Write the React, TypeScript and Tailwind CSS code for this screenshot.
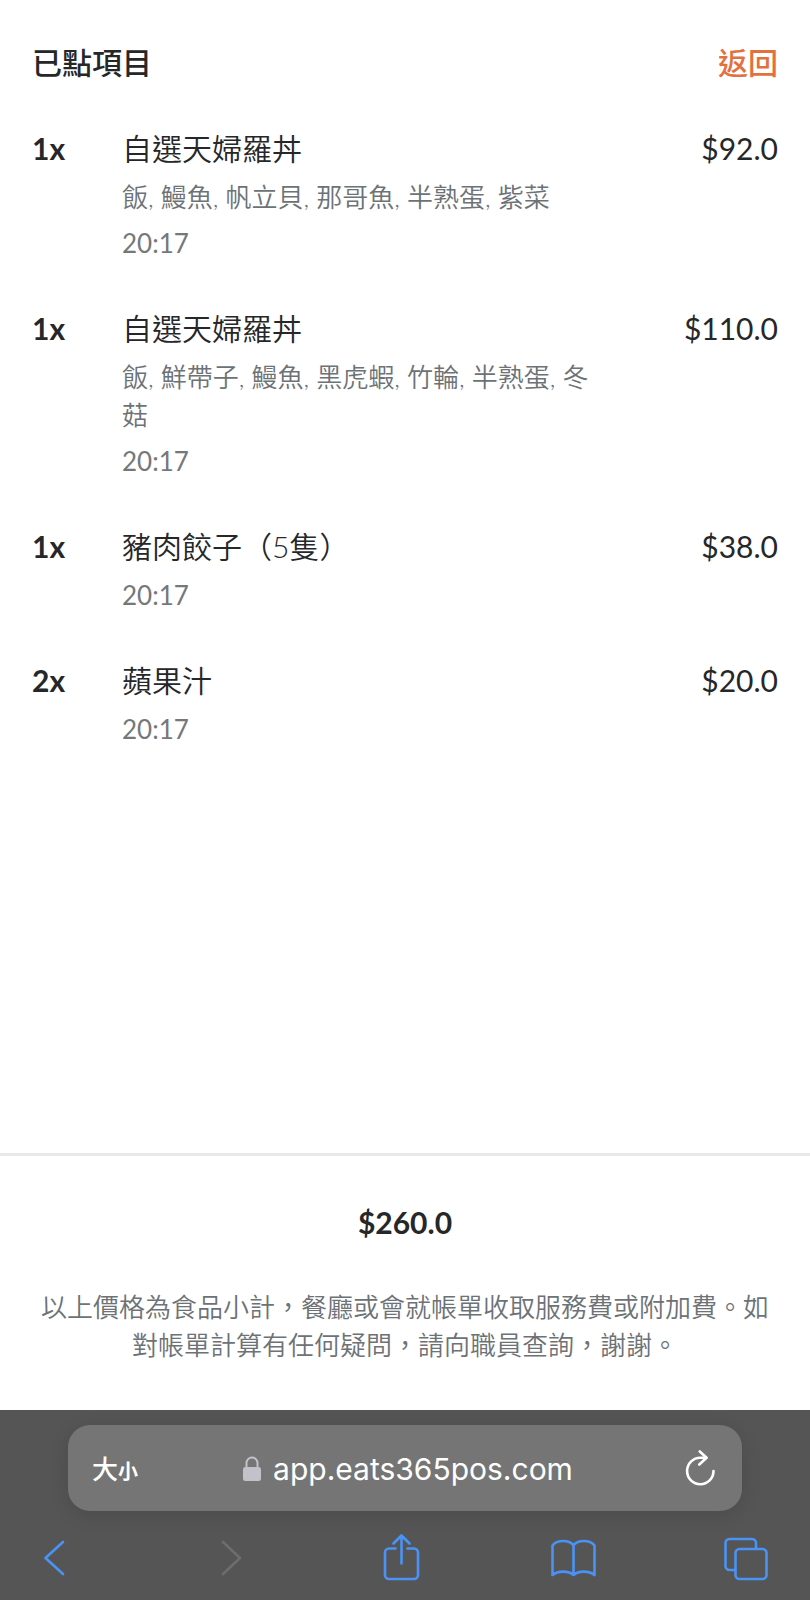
import React from 'react';

type OrderItem = {
  qty: number;
  name: string;
  options?: string;
  time: string;
  price: string;
};

const ITEMS: OrderItem[] = [
  { qty: 1, name: '自選天婦羅丼', options: '飯, 鰻魚, 帆立貝, 那哥魚, 半熟蛋, 紫菜', time: '20:17', price: '$92.0' },
  { qty: 1, name: '自選天婦羅丼', options: '飯, 鮮帶子, 鰻魚, 黑虎蝦, 竹輪, 半熟蛋, 冬菇', time: '20:17', price: '$110.0' },
  { qty: 1, name: '豬肉餃子（5隻）', time: '20:17', price: '$38.0' },
  { qty: 2, name: '蘋果汁', time: '20:17', price: '$20.0' },
];

const TOTAL = '$260.0';
const NOTE = '以上價格為食品小計，餐廳或會就帳單收取服務費或附加費。如對帳單計算有任何疑問，請向職員查詢，謝謝。';

function OrderRow({ item }: { item: OrderItem }) {
  return (
    <li className="flex items-start text-[30px] leading-[40px]">
      <span className="w-[90px] shrink-0 font-bold">{item.qty}x</span>
      <div className="flex flex-1 flex-col gap-2 min-w-0">
        <h2 className="mb-0.5 font-[350]">{item.name}</h2>
        {item.options && <p className="text-[26px] leading-[38px] font-[350] text-[#6c7276]">{item.options}</p>}
        <time className="text-[26px] leading-[38px] text-[#75787b]">{item.time}</time>
      </div>
      <span className="w-[176px] shrink-0 text-right">{item.price}</span>
    </li>
  );
}

function LockIcon() {
  return (
    <svg width="18" height="26" viewBox="0 0 18 26" fill="none" aria-hidden>
      <path d="M3.500 12V7a5.500 5.500 0 0 1 11 0v5" stroke="#c3c2ca" strokeWidth="2" />
      <rect x="0" y="11" width="18" height="14" rx="2.5" fill="#c3c2ca" />
    </svg>
  );
}

function AddressBar() {
  return (
    <div className="mx-[68px] flex h-[86px] items-center justify-between rounded-[22px] bg-[#757575] pl-6 pr-[26px] pt-0.5 text-white shadow-[0_4px_20px_rgba(0,0,0,0.12)]">
      <button type="button" aria-label="大小" className="flex w-12 items-baseline">
        <span className="text-[26px] font-medium">大</span>
        <span className="text-[20px] font-bold">小</span>
      </button>
      <button type="button" className="flex items-center gap-3 pr-2 font-[Inter] text-[30px]">
        <LockIcon />
        app.eats365pos.com
      </button>
      <button type="button" aria-label="重新載入" className="flex w-8 justify-center">
        <svg width="32" height="38" viewBox="0 0 32 38" fill="none" stroke="currentColor" strokeWidth="2.6" strokeLinecap="round" strokeLinejoin="round">
          <path d="M29.5 21A13.2 13.2 0 1 1 16.300 7.800h5.700" />
          <path d="M15.800 1.500l6.800 6.300-7.300 6.700" />
        </svg>
      </button>
    </div>
  );
}

function ToolbarButton({ label, disabled, children }: { label: string; disabled?: boolean; children: React.ReactNode }) {
  return (
    <button type="button" aria-label={label} disabled={disabled} className="text-[#4a93f5] disabled:text-[#6d6d6d]">
      <svg width="48" height="52" viewBox="0 0 48 52" fill="none" stroke="currentColor" strokeWidth="2.6" strokeLinecap="round" strokeLinejoin="round">
        {children}
      </svg>
    </button>
  );
}

function Toolbar() {
  return (
    <nav className="mt-5 flex items-center justify-between pl-[30px] pr-[41px]">
      <ToolbarButton label="返回上一頁">
        <path d="M33 11L15.5 27 33 43" />
      </ToolbarButton>
      <ToolbarButton label="下一頁" disabled>
        <path d="M20 11l17 16-17 16" />
      </ToolbarButton>
      <ToolbarButton label="分享">
        <path d="M19.5 17.500H13a4 4 0 0 0-4 4V44a4 4 0 0 0 4 4h25a4 4 0 0 0 4-4V21.500a4 4 0 0 0-4-4h-6.5" />
        <path d="M25.500 32.500V5M17.500 12.500l8-8 8 8" />
      </ToolbarButton>
      <ToolbarButton label="書籤">
        <path d="M25.500 14.500c-4-6-16.500-6-21 0V44c5.500-4.500 16-4.500 21 0 5-4.500 15.500-4.500 21 0V14.500c-4.500-6-17-6-21 0zM25.500 14.500V44" />
      </ToolbarButton>
      <ToolbarButton label="分頁">
        <path d="M14 39H8.500a4 4 0 0 1-4-4V12a4 4 0 0 1 4-4H31a4 4 0 0 1 4 4v5.500" />
        <rect x="14.500" y="18" width="31" height="30" rx="4" />
      </ToolbarButton>
    </nav>
  );
}

export default function App() {
  return (
    <div className="flex min-h-screen flex-col bg-white font-[Lato,'Noto_Sans_CJK_TC',sans-serif] text-[#262728]" lang="zh-HK">
      <header className="flex items-center justify-between px-8 pt-[42px] text-[30px] leading-[40px] font-medium">
        <h1>已點項目</h1>
        <a href="#" className="text-[#e2713f]">返回</a>
      </header>

      <main className="flex-1 px-8 pt-[46px] pb-12">
        <ul className="flex flex-col gap-[46px]">
          {ITEMS.map((item, i) => (
            <OrderRow key={i} item={item} />
          ))}
        </ul>
      </main>

      <section className="flex flex-col gap-[46px] border-t-3 border-[#e8e8e8] px-8 py-[46px] text-center">
        <p className="text-[30px] leading-[40px] font-bold">{TOTAL}</p>
        <p className="text-[26px] leading-[38px] font-[350] text-[#6c7276]">{NOTE}</p>
      </section>

      <footer className="bg-[#555555] pt-[15px] pb-[17px]">
        <AddressBar />
        <Toolbar />
      </footer>
    </div>
  );
}
